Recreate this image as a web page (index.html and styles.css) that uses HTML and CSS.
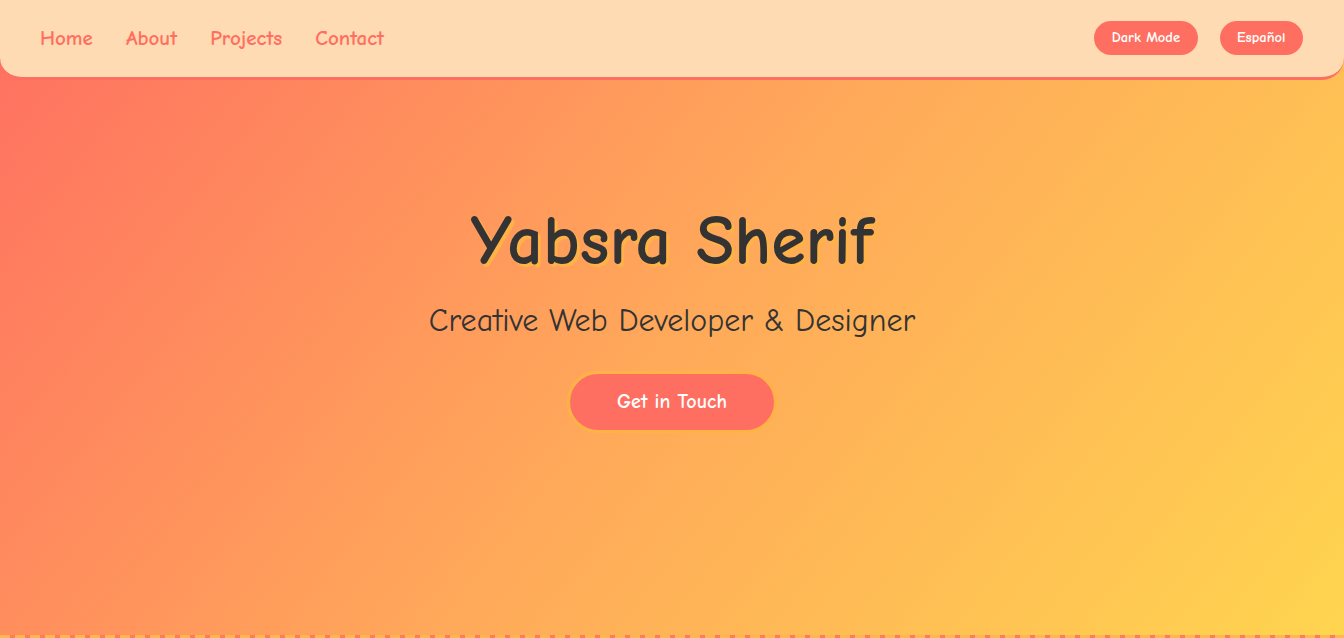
FILE: index.html
```html
<!DOCTYPE html>
<html lang="en">
<head>
<meta charset="utf-8">
<title>Yabsra Sherif</title>
<link rel="stylesheet" href="styles.css">
</head>
<body>
<header class="site-header">
  <nav class="nav">
    <a class="nav-link" href="#home">Home</a>
    <a class="nav-link" href="#about">About</a>
    <a class="nav-link" href="#projects">Projects</a>
    <a class="nav-link" href="#contact">Contact</a>
  </nav>
  <div class="header-actions">
    <button class="pill">Dark Mode</button>
    <button class="pill">Español</button>
  </div>
</header>
<main>
  <section class="hero" id="home">
    <h1 class="hero-title">Yabsra Sherif</h1>
    <p class="hero-subtitle">Creative Web Developer &amp; Designer</p>
    <a class="cta" href="#contact">Get in Touch</a>
  </section>
</main>
</body>
</html>
```
FILE: styles.css
```css
* { box-sizing: border-box; }
html, body { margin: 0; padding: 0; }
body {
  font-family: "Comic Sans MS", "Comic Neue", cursive;
  color: #333;
  overflow: hidden;
}
.site-header {
  position: fixed;
  top: 0; left: 0; right: 0;
  height: 80px;
  z-index: 10;
  display: flex;
  align-items: center;
  justify-content: space-between;
  padding: 0 41px 2px 40px;
  background: #ffdbb3;
  border-bottom: 3px solid #ff6f61;
  border-radius: 0 0 22px 22px;
}
.nav { display: flex; gap: 33px; }
.nav-link {
  color: #ff6f61;
  text-decoration: none;
  font-size: 21px;
  font-weight: bold;
}
.header-actions { display: flex; gap: 22px; }
.pill {
  font-family: inherit;
  font-size: 14.5px;
  font-weight: bold;
  color: #fff;
  background: #ff6f61;
  border: none;
  height: 34px;
  padding: 0 17.5px;
  border-radius: 17px;
}
.hero {
  height: 638px;
  display: flex;
  flex-direction: column;
  align-items: center;
  justify-content: center;
  text-align: center;
  padding: 0 0 6px;
  background: linear-gradient(128deg, #ff6f61 0%, #ffa85a 50%, #ffd54f 100%);
  position: relative;
}
.hero::after {
  content: "";
  position: absolute;
  left: 0; right: 0; bottom: 0;
  height: 3px;
  background: repeating-linear-gradient(90deg, #ffb84d 0 10px, #ff7a5e 10px 15px);
}
.hero-title {
  margin: 0;
  font-size: 70px;
  font-weight: bold;
  color: #333;
  text-shadow: 3px 3px 0 #ffb347;
  line-height: 1.2;
}
.hero-subtitle {
  margin: 18px 0 0;
  font-size: 32px;
  color: #333;
}
.cta {
  margin-top: 32px;
  display: block;
  padding: 0 47px;
  height: 62px;
  line-height: 56px;
  font-size: 20px;
  font-weight: bold;
  color: #fff;
  text-decoration: none;
  background: #ff6f61;
  border: 3px solid #ffb347;
  border-radius: 31px;
}
```
